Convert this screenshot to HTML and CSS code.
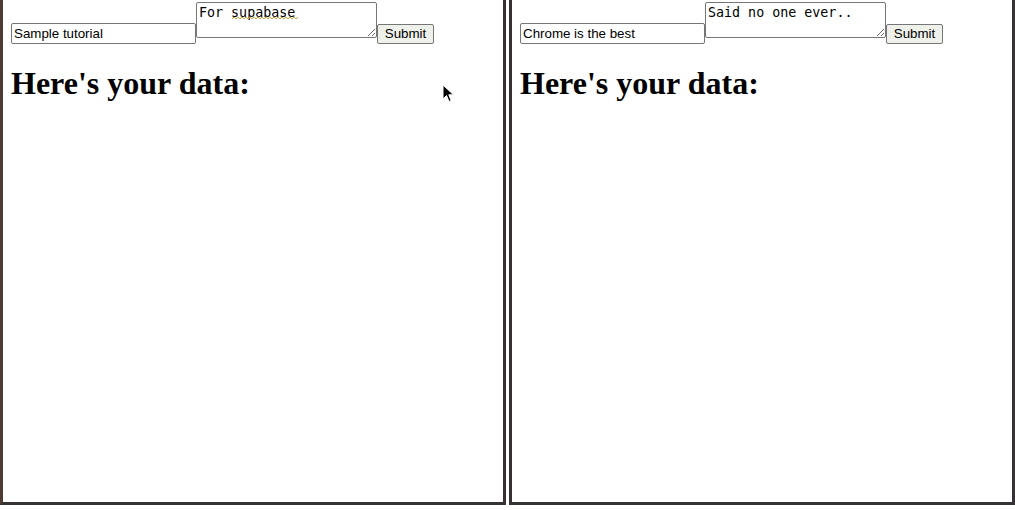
FILE: index.html
```html
<!DOCTYPE html>
<html>
<head>
<meta charset="utf-8">
<link rel="stylesheet" href="styles.css">
</head>
<body>
<div class="desktop">
  <div class="window window-left">
    <div class="page">
      <form class="entry"><input class="field" type="text" value="Sample tutorial"><textarea class="note" spellcheck="false">For supabase</textarea><button class="submit" type="button">Submit</button></form>
      <h1 class="title">Here's your data:</h1>
    </div>
    <svg class="squiggle" width="66" height="4" viewBox="0 0 66 4">
      <polyline points="0,3 2,1 4,3 6,1 8,3 10,1 12,3 14,1 16,3 18,1 20,3 22,1 24,3 26,1 28,3 30,1 32,3 34,1 36,3 38,1 40,3 42,1 44,3 46,1 48,3 50,1 52,3 54,1 56,3 58,1 60,3 62,1 64,3 66,1" fill="none" stroke="#d9a441" stroke-width="1"/>
    </svg>
    <svg class="cursor" width="13" height="20" viewBox="0 0 13 20">
      <path d="M1 1 L1 15 L4.5 11.5 L7 17.5 L9.2 16.6 L6.8 10.8 L11.5 10.8 Z" fill="#000" stroke="#fff" stroke-width="1"/>
    </svg>
  </div>
  <div class="window window-right">
    <div class="page">
      <form class="entry"><input class="field" type="text" value="Chrome is the best"><textarea class="note" spellcheck="false">Said no one ever..</textarea><button class="submit" type="button">Submit</button></form>
      <h1 class="title">Here's your data:</h1>
    </div>
  </div>
</div>
</body>
</html>
```

FILE: styles.css
```css
html, body {
  margin: 0;
  padding: 0;
  background: #ffffff;
}

.desktop {
  display: flex;
  gap: 3px;
  width: 1015px;
  height: 510px;
  background: #ffffff;
}

.window {
  position: relative;
  width: 500px;
  height: 502px;
  background: #ffffff;
  border: 3px solid #353135;
  border-top: none;
  flex: none;
}

.window-left {
  border-left-color: #4d3b33;
}

.page {
  padding: 2px 8px 0 8px;
  font-family: "Liberation Serif", serif;
  font-size: 16px;
  color: #000;
}

.entry {
  margin: 0;
}

.field {
  box-sizing: border-box;
  width: 185px;
  height: 21px;
  margin: 0;
  padding: 1px 2px;
  border: 1px solid #767676;
  border-radius: 2px;
  font-family: "Liberation Sans", Arial, sans-serif;
  font-size: 13.333px;
  color: #000;
  background: #fff;
  vertical-align: baseline;
}

.note {
  box-sizing: border-box;
  width: 181px;
  height: 36px;
  margin: 0;
  padding: 2px;
  border: 1px solid #767676;
  border-radius: 2px;
  font-family: "DejaVu Sans Mono", monospace;
  font-size: 13.333px;
  color: #000;
  background: #fff;
  vertical-align: baseline;
}

.submit {
  box-sizing: border-box;
  width: 57px;
  height: 20px;
  margin: 0;
  padding: 1px 6px;
  border: 1px solid #767676;
  border-radius: 2px;
  background: #eef0ea;
  font-family: "Liberation Sans", Arial, sans-serif;
  font-size: 13.333px;
  color: #000;
  vertical-align: baseline;
}

.title {
  margin: 21px 0 0 0;
  font-family: "Liberation Serif", serif;
  font-size: 32px;
  font-weight: bold;
}

.squiggle {
  position: absolute;
  left: 229px;
  top: 16px;
}

.cursor {
  position: absolute;
  left: 439px;
  top: 84px;
}
```
